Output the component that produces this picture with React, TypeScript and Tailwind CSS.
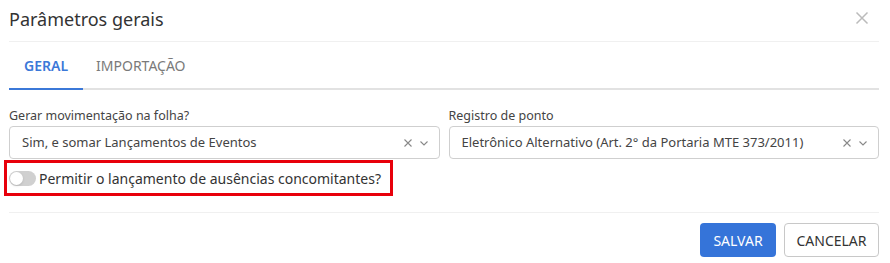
import { FC } from "react";

const font = { fontFamily: '"Noto Sans", "Open Sans", sans-serif' };

const SelectBox: FC<{ value: string }> = ({ value }) => (
    <div className="h-[33px] flex items-center border border-[#cfcfcf] rounded-[4px] pl-[12px] pr-[10px] bg-white">
        <div className="flex-1 text-[13px] text-[#444] truncate">{value}</div>
        <svg width="10" height="10" viewBox="0 0 10 10" className="mr-[6px]">
            <path d="M1.5 1.5 L8.5 8.5 M8.5 1.5 L1.5 8.5" stroke="#888" strokeWidth="1.1" fill="none" />
        </svg>
        <svg width="10" height="10" viewBox="0 0 10 10">
            <path d="M1.5 3.5 L5 7 L8.5 3.5" stroke="#888" strokeWidth="1.1" fill="none" />
        </svg>
    </div>
);

export default function App() {
    return (
        <div className="w-[890px] h-[263px] bg-white pl-[9px] pr-[11px]" style={font}>

            {/* cabeçalho */}
            <div className="h-[42px] flex items-center justify-between border-b border-[#f0f0f0]">
                <div className="text-[18px] text-[#333] -mt-[2px]">Parâmetros gerais</div>
                <svg width="14" height="14" viewBox="0 0 14 14" className="mr-[10px] -mt-[6px]">
                    <path d="M1.5 1.5 L12.5 12.5 M12.5 1.5 L1.5 12.5" stroke="#bbb" strokeWidth="1.5" fill="none" />
                </svg>
            </div>

            {/* abas */}
            <div className="flex h-[48px] border-b-[2px] border-[#e2e2e2]">
                <div className="px-[15px] flex items-center text-[14px] font-semibold text-[#3b78d8] border-b-[2px] border-[#3b78d8] -mb-[2px]">GERAL</div>
                <div className="px-[13px] flex items-center text-[14px] text-[#7a7a7a]">IMPORTAÇÃO</div>
            </div>

            {/* campos */}
            <div className="grid grid-cols-2 gap-[9px] mt-[17px]">
                <div>
                    <div className="text-[12.5px] text-[#444] h-[18px] leading-[18px] mb-[1px]">Gerar movimentação na folha?</div>
                    <SelectBox value="Sim, e somar Lançamentos de Eventos" />
                </div>
                <div>
                    <div className="text-[12.5px] text-[#444] h-[18px] leading-[18px] mb-[1px]">Registro de ponto</div>
                    <SelectBox value="Eletrônico Alternativo (Art. 2° da Portaria MTE 373/2011)" />
                </div>
            </div>

            <div className="-ml-[5px] mt-[1px] w-[389px] h-[36px] border-[3px] border-[#e8000b] flex items-center pl-[2px]">
                <div className="w-[27px] h-[15px] rounded-full bg-[#d0d0d0] flex items-center px-[1px] mr-[3px]">
                    <div className="w-[13px] h-[13px] rounded-full bg-white shadow-sm" />
                </div>
                <div className="text-[14px] text-[#333] whitespace-nowrap">Permitir o lançamento de ausências concomitantes?</div>
            </div>

            {/* rodapé */}
            <div className="mt-[16px] border-t border-[#f0f0f0] pt-[10px] flex justify-end gap-[8px]">
                <button className="h-[34px] w-[76px] rounded-[4px] bg-[#3574d9] text-white text-[14px]">SALVAR</button>
                <button className="h-[34px] w-[95px] rounded-[4px] border border-[#c8c8c8] bg-white text-[#333] text-[14px]">CANCELAR</button>
            </div>

        </div>
    );
}
